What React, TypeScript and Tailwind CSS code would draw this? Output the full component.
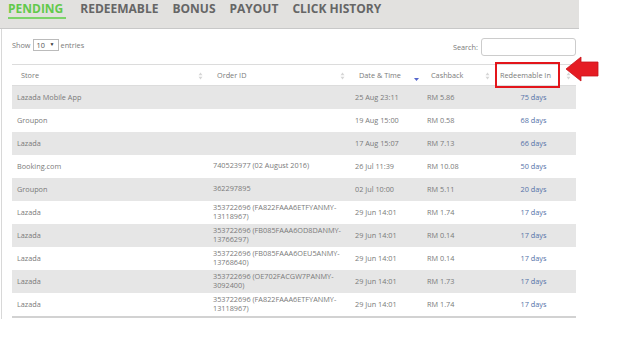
import React from 'react';

type Row = {
  store: string;
  order: string[];
  date: string;
  cashback: string;
  days: string;
};

const rows: Row[] = [
  { store: 'Lazada Mobile App', order: [], date: '25 Aug 23:11', cashback: 'RM 5.86', days: '75 days' },
  { store: 'Groupon', order: [], date: '19 Aug 15:00', cashback: 'RM 0.58', days: '68 days' },
  { store: 'Lazada', order: [], date: '17 Aug 15:07', cashback: 'RM 7.13', days: '66 days' },
  { store: 'Booking.com', order: ['740523977 (02 August 2016)'], date: '26 Jul 11:39', cashback: 'RM 10.08', days: '50 days' },
  { store: 'Groupon', order: ['362297895'], date: '02 Jul 10:00', cashback: 'RM 5.11', days: '20 days' },
  { store: 'Lazada', order: ['353722696 (FA822FAAA6ETFYANMY-', '13118967)'], date: '29 Jun 14:01', cashback: 'RM 1.74', days: '17 days' },
  { store: 'Lazada', order: ['353722696 (FB085FAAA6OD8DANMY-', '13766297)'], date: '29 Jun 14:01', cashback: 'RM 0.14', days: '17 days' },
  { store: 'Lazada', order: ['353722696 (FB085FAAA6OEU5ANMY-', '13768640)'], date: '29 Jun 14:01', cashback: 'RM 0.14', days: '17 days' },
  { store: 'Lazada', order: ['353722696 (OE702FACGW7PANMY-', '3092400)'], date: '29 Jun 14:01', cashback: 'RM 1.73', days: '17 days' },
  { store: 'Lazada', order: ['353722696 (FA822FAAA6ETFYANMY-', '13118967)'], date: '29 Jun 14:01', cashback: 'RM 1.74', days: '17 days' }
];

function SortIcon({ active }: { active?: boolean }) {
  if (active) {
    return (
      <svg width="5" height="8" viewBox="0 0 5 8" className="absolute right-[3px] top-[9px]">
        <polygon points="0,4 5,4 2.5,7" fill="#5566cc" />
      </svg>
    );
  }
  return (
    <svg width="5" height="8" viewBox="0 0 5 8" className="absolute right-[5px] top-[7px]">
      <polygon points="0.5,3.3 4.5,3.3 2.5,0.5" fill="#d6d6d6" />
      <polygon points="0.5,4.7 4.5,4.7 2.5,7.5" fill="#d6d6d6" />
    </svg>
  );
}

export default function App() {
  const tabs = ['PENDING', 'REDEEMABLE', 'BONUS', 'PAYOUT', 'CLICK HISTORY'];
  return (
    <div className="relative w-[640px] h-[347px] bg-white overflow-hidden font-['Open_Sans',sans-serif]">
      {/* Tabs */}
      <div className="w-[579px] h-[29px] bg-[#e2e1df] border-b border-[#c8c8c8] flex items-start pl-[8px] pt-[1px] gap-[14px]">
        {tabs.map((t, i) =>
          <span
            key={t}
            className={
              i === 0 ?
                'text-[12px] font-bold text-[#62c94c] border-b-2 border-[#7dd36b] pr-[3px] leading-[16px]' :
                'text-[12px] font-bold text-[#666] leading-[16px]'
            }>
            {t}
          </span>
        )}
      </div>

      {/* Body */}
      <div className="w-[578px] h-[290px] border-l border-[#d8d8d8] ml-[1px] pl-[10px] text-[7.3px] text-[#7a7a7a]">
        <div className="h-[35px] w-[564px] flex justify-between items-start">
          <div className="mt-[10px] flex items-center gap-[2px]">
            <span>Show</span>
            <div className="w-[26px] h-[12px] border border-[#bbb] bg-white flex items-center justify-between px-[3px]">
              <span className="text-[#555]">10</span>
              <span className="text-[5px] text-[#333]">▼</span>
            </div>
            <span>entries</span>
          </div>
          <div className="mt-[9px] flex items-center gap-[3px]">
            <span>Search:</span>
            <div className="w-[95px] h-[18px] border border-[#ccc] rounded-[3px] bg-white" />
          </div>
        </div>

        <table className="w-[564px] table-fixed border-collapse">
          <colgroup>
            <col className="w-[196px]" />
            <col className="w-[142px]" />
            <col className="w-[72px]" />
            <col className="w-[73px]" />
            <col className="w-[81px]" />
          </colgroup>
          <thead>
            <tr className="h-[21px] border-t border-b border-[#dcdcdc]">
              <th className="relative text-left font-normal pl-[9px]">Store<SortIcon /></th>
              <th className="relative text-left font-normal pl-[9px]">Order ID<SortIcon /></th>
              <th className="relative text-left font-normal pl-[9px]">Date &amp; Time<SortIcon active /></th>
              <th className="relative text-left font-normal pl-[9px]">Cashback<SortIcon /></th>
              <th className="relative text-left font-normal pl-[5px]">
                Redeemable In
                <SortIcon />
                <span className="absolute left-0 top-[-3px] w-[65px] h-[26px] border-2 border-[#e3151b]" />
              </th>
            </tr>
          </thead>
          <tbody>
            {rows.map((r, i) =>
              <tr key={i} className={i % 2 === 0 ? 'h-[23px] bg-[#e6e6e6]' : 'h-[23px] bg-white'}>
                <td className="pl-[5px] align-middle">{r.store}</td>
                <td className="pl-[5px] align-middle leading-[9.5px]">
                  {r.order.map((line, j) => <div key={j}>{line}</div>)}
                </td>
                <td className="pl-[5px] align-middle">{r.date}</td>
                <td className="pl-[5px] align-middle">{r.cashback}</td>
                <td className="text-center align-middle text-[#5572a8] pr-[4px]">{r.days}</td>
              </tr>
            )}
          </tbody>
        </table>
        <div className="w-[564px] h-[2px] bg-[#d2d2d2]" />
      </div>

      {/* Red pointer arrow */}
      <svg width="36" height="28" viewBox="0 0 36 28" className="absolute left-[564px] top-[55px]">
        <polygon points="2,14 17,2 17,7 34,7 34,21 17,21 17,26" fill="#e51c23" stroke="#c8141b" strokeWidth="0.8" />
      </svg>
    </div>
  );
}
